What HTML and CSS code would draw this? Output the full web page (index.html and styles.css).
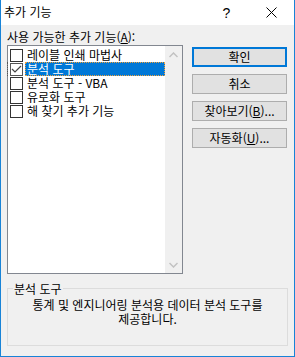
FILE: index.html
```html
<!DOCTYPE html>
<html lang="ko">
<head>
  <meta charset="UTF-8" />
  <title>추가 기능</title>
  <link rel="stylesheet" href="styles.css">
</head>
<body>

  <div class="window">
    <div class="titlebar">
      <span class="title">추가 기능</span>
      <span class="tb-btn help">?</span>
      <span class="tb-btn close">
        <svg width="11" height="11" viewBox="0 0 11 11">
          <path d="M0.5 0.5 L10.5 10.5 M10.5 0.5 L0.5 10.5" stroke="#000" stroke-width="1" fill="none"/>
        </svg>
      </span>
    </div>

    <div class="content">
      <div class="list-label">사용 가능한 추가 기능(<u>A</u>):</div>

      <div class="main">
        <div class="listbox">
          <div class="rows">
            <div class="row"><span class="check"></span><span class="text">레이블 인쇄 마법사</span></div>
            <div class="row selected">
              <span class="check">
                <svg width="11" height="11" viewBox="0 0 11 11">
                  <path d="M1 5 L4 8 L10 2" stroke="#444" stroke-width="1.2" fill="none"/>
                </svg>
              </span>
              <span class="text">분석 도구</span>
            </div>
            <div class="row"><span class="check"></span><span class="text">분석 도구 - VBA</span></div>
            <div class="row"><span class="check"></span><span class="text">유로화 도구</span></div>
            <div class="row"><span class="check"></span><span class="text">해 찾기 추가 기능</span></div>
          </div>
          <!-- disabled scrollbar -->
          <div class="scrollbar">
            <svg width="9" height="6" viewBox="0 0 9 6"><path d="M0.5 5 L4.5 1 L8.5 5" stroke="#c2c2c2" stroke-width="1.5" fill="none"/></svg>
            <svg width="9" height="6" viewBox="0 0 9 6"><path d="M0.5 1 L4.5 5 L8.5 1" stroke="#c2c2c2" stroke-width="1.5" fill="none"/></svg>
          </div>
        </div>

        <div class="buttons">
          <button class="default">확인</button>
          <button>취소</button>
          <button>찾아보기(<u>B</u>)...</button>
          <button>자동화(<u>U</u>)...</button>
        </div>
      </div>

      <fieldset class="group">
        <legend>분석 도구</legend>
        <p>통계 및 엔지니어링 분석용 데이터 분석 도구를<br>제공합니다.</p>
      </fieldset>
    </div>
  </div>

</body>
</html>
```

FILE: styles.css
```css
body {
  margin: 0;
  background: #ffffff;
  font-family: "Noto Sans CJK KR", "Noto Sans", sans-serif;
  font-size: 12px;
  color: #000;
}

.window {
  width: 295px;
  height: 357px;
  box-sizing: border-box;
  border: 1px solid #1883d7;
  border-top: none;
  display: flex;
  flex-direction: column;
}

.titlebar {
  height: 25px;
  background: #ffffff;
  display: flex;
  align-items: center;
}

.title {
  flex: 1;
  padding-left: 3px;
  line-height: 14px;
  padding-bottom: 1px;
}

.tb-btn {
  width: 45px;
  height: 25px;
  display: flex;
  align-items: center;
  justify-content: center;
}

.help {
  font-family: "Liberation Sans", sans-serif;
  font-size: 14px;
}

.close svg {
  display: block;
}

.content {
  flex: 1;
  background: #f0f0f0;
  padding: 5px 6px 0 6px;
}

.list-label {
  line-height: 14px;
  height: 15px;
}

.main {
  display: flex;
  gap: 9px;
}

.listbox {
  width: 176px;
  height: 229px;
  box-sizing: border-box;
  border: 1px solid #828790;
  background: #ffffff;
  display: flex;
}

.rows {
  flex: 1;
  padding-top: 2px;
}

.row {
  height: 14px;
  display: flex;
  align-items: center;
}

.check {
  width: 13px;
  height: 13px;
  box-sizing: border-box;
  border: 1px solid #333333;
  background: #ffffff;
  margin-left: 2px;
  margin-right: 2px;
  display: flex;
  align-items: center;
  justify-content: center;
}

.text {
  line-height: 14px;
  padding-left: 2px;
  white-space: nowrap;
}

.row.selected {
  border-left: 1px dotted #555;
  margin-left: -1px;
}

.row.selected .check {
  border-color: #555;
}

.row.selected .text {
  flex: 1;
  height: 14px;
  box-sizing: border-box;
  background: #0078d7;
  color: #ffffff;
  border: 1px dotted #f3a33b;
  line-height: 12px;
  padding-left: 1px;
}

.scrollbar {
  width: 17px;
  background: #f0f0f0;
  display: flex;
  flex-direction: column;
  justify-content: space-between;
  align-items: center;
  padding: 6px 0 5px 0;
}

.buttons {
  display: flex;
  flex-direction: column;
  gap: 7px;
  padding-top: 2px;
}

button {
  width: 95px;
  height: 20px;
  box-sizing: border-box;
  background: #e1e1e1;
  border: 1px solid #adadad;
  font-family: "Noto Sans CJK KR", "Noto Sans", sans-serif;
  font-size: 12px;
  line-height: 14px;
  padding: 0;
  color: #000;
}

button.default {
  border: 2px solid #0078d7;
}

.group {
  margin: 8px 0 0 0;
  padding: 0 4px;
  height: 64px;
  box-sizing: border-box;
  border: 1px solid #dcdcdc;
}

.group legend {
  padding: 0 1px;
  margin-left: 1px;
  line-height: 13px;
}

.group p {
  margin: 3px 0 0 0;
  text-align: center;
  line-height: 14px;
}
```
